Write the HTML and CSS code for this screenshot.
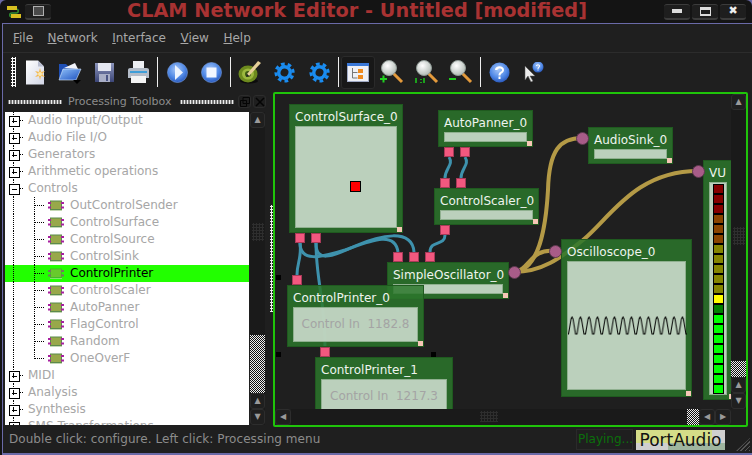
FILE: index.html
```html
<!DOCTYPE html>
<html lang="en">
<head>
  <meta charset="UTF-8">
  <meta name="viewport" content="width=device-width, initial-scale=1.0">
  <title>CLAM Network Editor</title>
  <link rel="stylesheet" href="styles.css">
</head>
<body>

<svg class="defs" width="0" height="0">
  <defs>
    <radialGradient id="blue" cx="45%" cy="35%" r="70%">
      <stop offset="0" stop-color="#a9c8f8"/><stop offset=".6" stop-color="#4f88e6"/><stop offset="1" stop-color="#2350b4"/>
    </radialGradient>
    <radialGradient id="glass" cx="40%" cy="35%" r="70%">
      <stop offset="0" stop-color="#fff"/><stop offset="1" stop-color="#aeb8b2"/>
    </radialGradient>
    <linearGradient id="paper" x1="0" y1="0" x2="1" y2="1">
      <stop offset="0" stop-color="#fff"/><stop offset="1" stop-color="#d2d6e6"/>
    </linearGradient>
    <linearGradient id="floppy" x1="0" y1="0" x2="0" y2="1">
      <stop offset="0" stop-color="#8d96bc"/><stop offset="1" stop-color="#3c4678"/>
    </linearGradient>
    <linearGradient id="folder" x1="0" y1="0" x2="1" y2="1">
      <stop offset="0" stop-color="#8fc0f8"/><stop offset="1" stop-color="#1c50c0"/>
    </linearGradient>
    <pattern id="wavep" width="8.5" height="20" patternUnits="userSpaceOnUse">
      <path d="M0 18h.5L3 3l1-2 1 2 2.500 15h1" fill="none" stroke="#000"/>
    </pattern>
    <g id="mag">
      <line x1="13" y1="13" x2="22" y2="22" stroke="#e39a3c" stroke-width="3"/>
      <circle cx="9" cy="8" r="7.500" fill="url(#glass)" stroke="#8f9a95"/>
    </g>
    <g id="gear" fill="none" stroke="#1a8cf0" transform="rotate(20 12 12)">
      <circle cx="12" cy="12" r="6.500" stroke-width="4"/>
      <circle cx="12" cy="12" r="9.800" stroke-width="3.500" stroke-dasharray="4.200 3.500"/>
    </g>
    <g id="chip">
      <rect x="2" y="2" width="12" height="9" fill="#c4d8b4"/>
      <rect x="2.500" y="1" width="11" height="8.500" fill="#98a84a" stroke="#5c8a4c"/>
      <path d="M0 2h3v2h-3zM0 6.500h3v2h-3zM13 2h3v2h-3zM13 6.500h3v2h-3z" fill="#a820a0"/>
    </g>
  </defs>
</svg>

<div class="window">

  <header class="titlebar">
    <div class="title-left">
      <svg width="14" height="14" viewBox="0 0 14 14"><path d="M3 4h6c3 0 3 4 0 4H5c-3 0-3 4 0 4h6" fill="none" stroke="#2f8f30" stroke-width="1.500"/><path d="M0 1h10v4h-10zM4 9h10v4h-10z" fill="#d8c020"/></svg>
      <span class="wm-btn"><i class="wm-square"></i></span>
    </div>
    <h1 class="title">CLAM Network Editor - Untitled [modified]</h1>
    <div class="title-right">
      <span class="wm-btn"><i class="wm-min"></i></span>
      <span class="wm-btn"><i class="wm-max"></i></span>
      <span class="wm-btn wm-x">✖</span>
    </div>
  </header>

  <div class="frame">
    <nav class="menubar">
      <span><u>F</u>ile</span>
      <span><u>N</u>etwork</span>
      <span><u>I</u>nterface</span>
      <span><u>V</u>iew</span>
      <span><u>H</u>elp</span>
    </nav>

    <div class="toolbar">
      <i class="grip-v"></i>
      <span class="tool"><svg width="21" height="25" viewBox="0 0 21 25"><path d="M1 .5h12l6 6v18h-18z" fill="url(#paper)"/><path d="M13 .5v6h6z" fill="#b9bed0"/><path d="M15 8l1 4 4-1-3 3 3 3-4-1-1 4-1-4-4 1 3-3-3-3 4 1z" fill="#f4b84a"/><circle cx="15" cy="14" r="2" fill="#fbe9b0"/></svg></span>
      <span class="tool"><svg width="24" height="24" viewBox="0 0 24 24"><path d="M1 4h7l2 2h8v12h-17z" fill="#1f4fb4"/><path d="M6 8l11-5 3 6z" fill="#f2f4fa"/><path d="M5 9h18l-5 11h-17z" fill="url(#folder)" stroke="#d5e6fb" stroke-width=".6"/><path d="M15 20h8l-4 4z" fill="#000"/></svg></span>
      <span class="tool"><svg width="19" height="19" viewBox="0 0 19 19"><path d="M0 0h19v19h-19z" fill="url(#floppy)"/><path d="M3 0h13v8h-13z" fill="#e4e6f0"/><path d="M4 11h11v8h-11z" fill="#a8aec6"/><path d="M11 12h2v6h-2z" fill="#4a5484"/></svg></span>
      <span class="tool"><svg width="23" height="22" viewBox="0 0 23 22"><path d="M6 0h11v9h-11z" fill="#eef0f4"/><path d="M1 9c0-2 2-2 4-2h13c2 0 4 0 4 2v8h-21z" fill="#b4bcc8"/><path d="M3 10h17v2h-17z" fill="#3f9ed8"/><path d="M4 15h15v7h-15z" fill="#f4f4f4"/></svg></span>
      <i class="sep"></i>
      <span class="tool"><svg width="21" height="21" viewBox="0 0 21 21"><circle cx="10.500" cy="10.500" r="10" fill="url(#blue)"/><circle cx="10.500" cy="10.500" r="10" fill="none" stroke="#7aa4ea" stroke-width=".6"/><path d="M8 3l8 7.500-8 7.500z" fill="#eef4ff"/></svg></span>
      <span class="tool"><svg width="21" height="21" viewBox="0 0 21 21"><circle cx="10.500" cy="10.500" r="10" fill="url(#blue)"/><circle cx="10.500" cy="10.500" r="10" fill="none" stroke="#7aa4ea" stroke-width=".6"/><rect x="5.500" y="5.500" width="10" height="10" fill="#f2f6ff"/></svg></span>
      <i class="sep"></i>
      <span class="tool"><svg width="24" height="24" viewBox="0 0 24 24"><ellipse cx="11" cy="21" rx="9" ry="2.500" fill="#0c0c0c"/><ellipse cx="10" cy="14" rx="9.500" ry="8.500" fill="#6d8a1e"/><ellipse cx="10" cy="14" rx="6" ry="5.500" fill="#9cb83e"/><circle cx="10" cy="14" r="3" fill="#3e5a14"/><path d="M9 14l11-13 3 2-12 13z" fill="#e6cf98"/><path d="M9 14l2 2-3 1z" fill="#222"/></svg></span>
      <span class="tool"><svg width="21" height="21" viewBox="0 0 24 24"><use href="#gear"/></svg></span>
      <span class="tool"><svg width="21" height="21" viewBox="0 0 24 24"><use href="#gear"/></svg></span>
      <i class="sep"></i>
      <span class="tool toggle">
        <svg width="22" height="19" viewBox="0 0 22 19"><rect x=".5" y=".5" width="21" height="18" fill="#eef0f6" stroke="#a0aac4"/><rect x="0" y="0" width="22" height="3" fill="#3a78d8"/><path d="M5.500 5v10h5M5.500 9.500h5" fill="none" stroke="#777"/><path d="M11 6h5v4h-5zM11 12h5v4h-5z" fill="#ee8a20"/></svg>
      </span>
      <span class="tool"><svg width="24" height="24" viewBox="0 0 24 24"><use href="#mag"/><path d="M0 19h7M3.500 15.500v7" stroke="#20d020" stroke-width="2"/></svg></span>
      <span class="tool"><svg width="24" height="24" viewBox="0 0 24 24"><use href="#mag"/><path d="M0 18h2v5h-2zM5 19h2v1h-2zM5 22h2v1h-2zM8 18h2v5h-2z" fill="#1ca01c"/></svg></span>
      <span class="tool"><svg width="24" height="24" viewBox="0 0 24 24"><use href="#mag"/><path d="M0 19h7" stroke="#20d020" stroke-width="2"/></svg></span>
      <i class="sep"></i>
      <span class="tool"><svg width="21" height="21" viewBox="0 0 21 21"><circle cx="10.500" cy="10.500" r="10" fill="url(#blue)"/><path d="M6 8c0-5 9-5 9 0 0 3-3.500 3-3.500 5.500h-2c0-4 3.500-3.500 3.500-5.500 0-2-4.500-2-4.500 0zM9.500 14.500h2v2.500h-2z" fill="#fff"/></svg></span>
      <span class="tool"><svg width="20" height="20" viewBox="0 0 20 20"><path d="M1 4v14l3-4 3 6 2-1-3-5h5z" fill="#ececec" stroke="#555" stroke-width=".5"/><circle cx="14" cy="5" r="5.500" fill="url(#blue)"/><path d="M12 4c0-2 4-2 4 0 0 1.500-1.500 1.500-1.500 3h-1c0-2 1.500-2 1.500-3 0-1-2-1-2 0zM13.500 7.500h1v1h-1z" fill="#fff"/></svg></span>
    </div>

    <div class="workspace">
      <aside class="dock">
        <div class="dock-title">
          <i class="grip-h"></i>
          <span class="dock-name">Processing Toolbox</span>
          <i class="grip-h"></i>
          <span class="dock-btn">
            <svg width="10" height="10" viewBox="0 0 10 10"><path d="M3 .5h6.500v6h-6.500zM.5 3.500h6v6h-6z" fill="#1f1f1f" stroke="#050505"/></svg>
          </span>
          <span class="dock-btn">
            <svg width="10" height="10" viewBox="0 0 10 10"><path d="M1 1l8 8M9 1l-8 8" stroke="#050505" stroke-width="1.500"/></svg>
          </span>
        </div>
        <div class="toolbox">
          <ul class="tree">
            <li class="cat closed">Audio Input/Output</li>
            <li class="cat closed">Audio File I/O</li>
            <li class="cat closed">Generators</li>
            <li class="cat closed">Arithmetic operations</li>
            <li class="cat open">Controls</li>
            <li class="leaf"><svg width="16" height="12"><use href="#chip"/></svg>OutControlSender</li>
            <li class="leaf"><svg width="16" height="12"><use href="#chip"/></svg>ControlSurface</li>
            <li class="leaf"><svg width="16" height="12"><use href="#chip"/></svg>ControlSource</li>
            <li class="leaf"><svg width="16" height="12"><use href="#chip"/></svg>ControlSink</li>
            <li class="leaf current"><svg width="16" height="12"><use href="#chip"/></svg>ControlPrinter</li>
            <li class="leaf"><svg width="16" height="12"><use href="#chip"/></svg>ControlScaler</li>
            <li class="leaf"><svg width="16" height="12"><use href="#chip"/></svg>AutoPanner</li>
            <li class="leaf"><svg width="16" height="12"><use href="#chip"/></svg>FlagControl</li>
            <li class="leaf"><svg width="16" height="12"><use href="#chip"/></svg>Random</li>
            <li class="leaf last"><svg width="16" height="12"><use href="#chip"/></svg>OneOverF</li>
            <li class="cat closed">MIDI</li>
            <li class="cat closed">Analysis</li>
            <li class="cat closed">Synthesis</li>
            <li class="cat closed">SMS Transformations</li>
          </ul>
          <div class="vscroll tree-vs">
            <span class="sb-btn">▲</span>
            <span class="sb-space"></span>
            <span class="sb-dither"></span>
            <span class="sb-btn">▲</span>
            <span class="sb-btn">▼</span>
            <i class="sb-dots"></i>
          </div>
        </div>
      </aside>

      <i class="splitter"></i>

      <main class="canvas-frame">
        <div class="canvas-row">
          <div class="canvas">
            <svg class="wires" width="456" height="315" viewBox="275 94 456 315">
              <g class="wire-blue">
                <path d="M300 243C300 262 320 258 345 250C370 241 395 230 398 252"/>
                <path d="M316 243C316 262 330 258 355 246C380 235 412 228 414 252"/>
                <path d="M300 243C302 258 297 262 297 275"/>
                <path d="M316 243C316 280 325 300 325 347"/>
                <path d="M449 157C454 165 445 168 445 178"/>
                <path d="M465 157C470 165 461 168 461 178"/>
                <path d="M445 235C445 246 430 240 430 252"/>
              </g>
              <g class="wire-tan">
                <path d="M514 272C530 270 530 248 555 251"/>
                <path d="M514 272C540 270 546 225 548 190C549 150 560 138 582 138"/>
                <path d="M514 272C545 272 565 254 583 240C610 218 635 171 698 171"/>
              </g>
            </svg>

            <div class="node n-surface">
              <div class="node-name">ControlSurface_0</div>
              <div class="node-body"><i class="knob"></i></div>
              <i class="resize"></i>
              <i class="port cp" style="left:5px;top:128px"></i>
              <i class="port cp" style="left:21px;top:128px"></i>
            </div>
            <div class="node n-panner">
              <div class="node-name">AutoPanner_0</div>
              <div class="node-body"></div>
              <i class="resize"></i>
              <i class="port cp" style="left:5px;top:36px"></i>
              <i class="port cp" style="left:21px;top:36px"></i>
            </div>
            <div class="node n-scaler">
              <div class="node-name">ControlScaler_0</div>
              <div class="node-body"></div>
              <i class="resize"></i>
              <i class="port cp" style="left:5px;top:-11px"></i>
              <i class="port cp" style="left:21px;top:-11px"></i>
              <i class="port cp" style="left:5px;top:36px"></i>
            </div>
            <div class="node n-sink">
              <div class="node-name">AudioSink_0</div>
              <div class="node-body"></div>
              <i class="resize"></i>
            </div>
            <div class="node n-scope">
              <div class="node-name">Oscilloscope_0</div>
              <div class="node-body">
                <svg class="wave" width="119" height="20"><rect width="119" height="20" fill="url(#wavep)"/></svg>
              </div>
              <i class="resize"></i>
            </div>
            <div class="node n-vu">
              <div class="node-name">VU</div>
              <div class="node-body">
                <i class="led red"></i><i class="led red"></i><i class="led red"></i>
                <i class="led orange"></i><i class="led orange"></i><i class="led orange"></i>
                <i class="led olive"></i><i class="led olive"></i><i class="led olive"></i><i class="led olive"></i><i class="led olive"></i>
                <i class="led yellow"></i><i class="led dark"></i>
                <i class="led green"></i><i class="led green"></i><i class="led green"></i><i class="led green"></i>
                <i class="led green"></i><i class="led green"></i><i class="led green"></i><i class="led green"></i>
              </div>
              <i class="resize"></i>
            </div>
            <div class="node n-osc">
              <div class="node-name">SimpleOscillator_0</div>
              <div class="node-body"></div>
              <i class="resize"></i>
              <i class="port cp" style="left:5px;top:-11px"></i>
              <i class="port cp" style="left:21px;top:-11px"></i>
              <i class="port cp" style="left:37px;top:-11px"></i>
            </div>
            <div class="node n-print0">
              <div class="node-name">ControlPrinter_0</div>
              <div class="node-body printer">Control In&nbsp; 1182.8</div>
              <i class="resize"></i>
              <i class="port cp" style="left:4px;top:-11px"></i>
            </div>
            <div class="node n-print1">
              <div class="node-name">ControlPrinter_1</div>
              <div class="node-body printer">Control In&nbsp; 1217.3</div>
              <i class="port cp" style="left:4px;top:-11px"></i>
            </div>

            <i class="port ap" style="left:233px;top:172px"></i>
            <i class="port ap" style="left:274px;top:151px"></i>
            <i class="port ap" style="left:301px;top:38px"></i>
            <i class="port ap" style="left:417px;top:71px"></i>
            <i class="handle" style="left:1px;top:181px"></i>
            <i class="handle" style="left:1px;top:258px"></i>
            <i class="handle" style="left:156px;top:258px"></i>
          </div>
          <div class="vscroll canvas-vs">
            <span class="sb-btn">▲</span>
            <span class="sb-space"></span>
            <span class="sb-dither"></span>
            <span class="sb-btn">▲</span>
            <span class="sb-btn">▼</span>
            <i class="sb-dots"></i>
          </div>
        </div>
        <div class="hscroll">
          <span class="sb-btn">◀</span>
          <span class="sb-space"></span>
          <span class="sb-dither"></span>
          <span class="sb-btn">◀</span>
          <span class="sb-btn">▶</span>
          <i class="sb-dots"></i>
        </div>
      </main>
    </div>

    <footer class="statusbar">
      <span class="hint">Double click: configure. Left click: Processing menu</span>
      <span class="playing">Playing...</span>
      <span class="backend">PortAudio</span>
      <i class="sizegrip"></i>
    </footer>
  </div>
</div>

</body>
</html>
```

FILE: styles.css
```css
* {
  box-sizing: border-box;
}

body {
  margin: 0;
  width: 752px;
  height: 455px;
  overflow: hidden;
  background-color: #6a6aa8;
  font-family: "DejaVu Sans", sans-serif;
  font-size: 12px;
}

i {
  display: block;
}

.defs {
  position: absolute;
}

.window {
  width: 752px;
  height: 455px;
  background: #141414;
  border-radius: 6px 6px 0 0;
  display: flex;
  flex-direction: column;
}

/* title bar */
.titlebar {
  height: 23px;
  flex: none;
  display: flex;
  align-items: center;
  justify-content: space-between;
  padding: 0 6px 0 7px;
  position: relative;
}

.title {
  position: absolute;
  left: 127px;
  top: -1px;
  margin: 0;
  font-size: 19.3px;
  line-height: 24px;
  font-weight: bold;
  color: #a83232;
  white-space: nowrap;
}

.title-left,
.title-right {
  display: flex;
  align-items: center;
  gap: 2px;
}

.title-left {
  gap: 4px;
}

.wm-btn {
  width: 26px;
  height: 16px;
  background: #1e1e1e;
  border-top: 1px solid #3c3c3c;
  border-bottom: 2px solid #3c3c3c;
  border-radius: 3px;
  display: flex;
  align-items: center;
  justify-content: center;
}

.wm-square {
  width: 11px;
  height: 10px;
  background: #4a4a4a;
  border: 1px solid #b0b0b0;
}

.wm-min {
  width: 10px;
  height: 4px;
  background: #ddd;
}

.wm-max {
  width: 11px;
  height: 9px;
  border: 1px solid #ddd;
  border-top-width: 3px;
  border-bottom-width: 2px;
}

.wm-x {
  color: #eee;
  font-size: 11px;
  line-height: 14px;
}

/* main frame */
.frame {
  flex: 1;
  min-height: 0;
  margin-left: 2px;
  background: #1f1f1f;
  border: 1px solid #6a6aa8;
  border-bottom-width: 2px;
  border-right: 0;
  display: flex;
  flex-direction: column;
}

.menubar {
  height: 29px;
  flex: none;
  display: flex;
  align-items: center;
  gap: 14.5px;
  padding: 0 0 0 10px;
  color: #a8a8a8;
  border-bottom: 1px solid #2c2c2c;
}

.toolbar {
  height: 38px;
  flex: none;
  display: flex;
  align-items: center;
  padding-left: 8px;
}

.grip-v {
  width: 5px;
  height: 30px;
  background: radial-gradient(circle, #fff 0 1px, transparent 1.2px) 0 0 / 3px 3px;
  margin-right: 2px;
}

.tool {
  width: 34.5px;
  height: 33px;
  flex: none;
  display: flex;
  align-items: center;
  justify-content: center;
}

.sep {
  width: 1px;
  height: 30px;
  margin: 0 2px 0 1px;
  background: #eee;
  flex: none;
}

.toggle {
  background: #181818;
  border: 1px solid #2a2a2a;
  border-radius: 3px;
}

.workspace {
  height: 336px;
  flex: none;
  display: flex;
  align-items: flex-start;
}

/* toolbox */
.dock {
  width: 263px;
  margin-left: 2px;
  flex: none;
}

.dock-title {
  height: 21px;
  display: flex;
  align-items: center;
  padding-left: 3px;
  color: #8c8c8c;
  font-size: 11px;
}

.dock-name {
  width: 104px;
  margin: 0 8px 0 6px;
  white-space: nowrap;
}

.grip-h {
  width: 54px;
  height: 4px;
  background: radial-gradient(circle, #eee 0 1px, transparent 1.2px) 0 0 / 3px 2px;
}

.dock-btn {
  width: 13px;
  height: 13px;
  margin-left: 4px;
  margin-right: -2px;
  border: 1px solid #2c2c2c;
  border-radius: 3px;
  display: flex;
  align-items: center;
  justify-content: center;
}

.toolbox {
  height: 313px;
  display: flex;
  overflow: hidden;
}

.tree {
  width: 244px;
  height: 313px;
  margin: 0 1px 0 0;
  padding: 0;
  list-style: none;
  background: #fff;
  overflow: hidden;
  color: #a6a6a6;
  flex: none;
}

.tree li {
  height: 17px;
  line-height: 17px;
  position: relative;
  white-space: nowrap;
}

.cat {
  padding-left: 23px;
  background:
    repeating-linear-gradient(#000 0 1px, transparent 1px 2px) 8px 0 / 1px 100% no-repeat,
    repeating-linear-gradient(90deg, #000 0 1px, transparent 1px 2px) 13px 8px / 6px 1px no-repeat;
}

.cat::before {
  content: "";
  position: absolute;
  left: 4px;
  top: 4px;
  width: 9px;
  height: 9px;
  background: #fff linear-gradient(#000, #000) center / 5px 1px no-repeat;
  border: 1px solid #000;
  z-index: 1;
}

.closed::after {
  content: "";
  position: absolute;
  left: 8px;
  top: 6px;
  width: 1px;
  height: 5px;
  background: #000;
  z-index: 2;
}

.leaf {
  padding-left: 43px;
  display: flex;
  align-items: center;
  gap: 6px;
  background:
    repeating-linear-gradient(#000 0 1px, transparent 1px 2px) 8px 0 / 1px 100% no-repeat,
    repeating-linear-gradient(#000 0 1px, transparent 1px 2px) 29px 0 / 1px 100% no-repeat,
    repeating-linear-gradient(90deg, #000 0 1px, transparent 1px 2px) 30px 8px / 10px 1px no-repeat;
}

.leaf.last {
  background:
    repeating-linear-gradient(#000 0 1px, transparent 1px 2px) 8px 0 / 1px 100% no-repeat,
    repeating-linear-gradient(#000 0 1px, transparent 1px 2px) 29px 0 / 1px 9px no-repeat,
    repeating-linear-gradient(90deg, #000 0 1px, transparent 1px 2px) 30px 8px / 10px 1px no-repeat;
}

.tree .current {
  background-color: #22ff00;
  color: #000;
}

.current svg {
  opacity: .6;
}

/* scrollbars */
.vscroll {
  width: 15px;
  flex: none;
  display: flex;
  flex-direction: column;
  align-items: center;
  background: #1a1a1a;
  position: relative;
}

.hscroll {
  height: 16px;
  flex: none;
  display: flex;
  padding-right: 15px;
  background: #1f1f1f;
  position: relative;
}

.sb-btn {
  flex: none;
  width: 15px;
  height: 16px;
  color: #9a9a9a;
  font-size: 8px;
  line-height: 14px;
  text-align: center;
  background: #1f1f1f;
  border: 1px solid #2d2d2d;
  border-radius: 3px;
}

.hscroll .sb-btn {
  width: 16px;
}

.sb-space {
  flex: 1;
  min-width: 0;
}

.hscroll .sb-space {
  background: #1a1a1a;
}

.sb-dither {
  flex: none;
  width: 100%;
  height: 58px;
  background: repeating-conic-gradient(#111 0 25%, #eee 0 50%) 0 0 / 2px 2px;
}

.hscroll .sb-dither {
  width: 12px;
  height: 100%;
}

.canvas-vs .sb-dither {
  height: 16px;
}

.sb-dots {
  position: absolute;
  width: 12px;
  height: 18px;
  left: 2px;
  background: radial-gradient(circle, #2e2e2e 0 1px, transparent 1.2px) 0 0 / 3px 3px;
}

.tree-vs .sb-dots {
  top: 111px;
}

.canvas-vs .sb-dots {
  top: 133px;
}

.hscroll .sb-dots {
  left: 205px;
  top: 2px;
  width: 18px;
  height: 11px;
}

/* network canvas */
.splitter {
  width: 3px;
  height: 107px;
  margin: 114px 0 0 2px;
  flex: none;
  background: radial-gradient(circle, #eee 0 1px, transparent 1.2px) 0 0 / 3px 3px;
}

.canvas-frame {
  width: 475px;
  height: 335px;
  margin-top: 1px;
  flex: none;
  border: 2px solid #1fc40a;
  border-radius: 2px;
  display: flex;
  flex-direction: column;
}

.canvas-row {
  flex: 1;
  min-height: 0;
  display: flex;
}

.canvas {
  flex: 1;
  position: relative;
  overflow: hidden;
  background: #1f1f1f;
}

.wires {
  position: absolute;
  left: 0;
  top: 0;
}

.wires path {
  fill: none;
}

.wire-blue path {
  stroke: #3e92ad;
  stroke-width: 3;
}

.wire-tan path {
  stroke: #b49a46;
  stroke-width: 4;
}

.node {
  position: absolute;
  background: rgba(44, 119, 44, .85);
  border: 1px solid #1f5a1f;
  padding: 0 5px;
}

.node-name {
  height: 21px;
  line-height: 25px;
  color: #eef4ee;
  font-size: 12px;
  white-space: nowrap;
}

.node-body {
  background: rgba(203, 219, 204, .9);
  border: 1px solid #8fb08f;
  position: relative;
}

.resize {
  position: absolute;
  right: 0;
  bottom: 0;
  width: 5px;
  height: 5px;
  background: #f6c6b6;
}

.n-surface { left: 14px; top: 10px; width: 114px; height: 129px; }
.n-surface .node-body { height: 102px; }
.n-panner { left: 163px; top: 16px; width: 95px; height: 37px; }
.n-panner .node-body { height: 10px; }
.n-scaler { left: 159px; top: 94px; width: 105px; height: 37px; }
.n-scaler .node-body { height: 10px; }
.n-sink { left: 313px; top: 33px; width: 85px; height: 37px; }
.n-sink .node-body { height: 10px; }
.n-scope { left: 286px; top: 145px; width: 131px; height: 158px; }
.n-scope .node-body { height: 129px; }
.n-vu { left: 428px; top: 66px; width: 32px; height: 240px; }
.n-vu .node-body { height: 213px; width: 18px; padding: 1px 3px; }
.n-osc { left: 112px; top: 168px; width: 122px; height: 37px; }
.n-osc .node-body { height: 10px; }
.n-print0 { left: 12px; top: 191px; width: 137px; height: 62px; }
.n-print1 { left: 40px; top: 263px; width: 138px; height: 70px; }

.printer {
  height: 35px;
  line-height: 32px;
  text-align: center;
  color: #a4a4a4;
  font-size: 12px;
  white-space: nowrap;
}

.knob {
  position: absolute;
  left: 54px;
  top: 54px;
  width: 11px;
  height: 11px;
  background: #f00;
  border: 1px solid #000;
}

.wave {
  position: absolute;
  left: 0;
  top: 54px;
}

.led {
  width: 11px;
  height: 10px;
  border: 1px solid #000;
}

.red { background: #850000; }
.orange { background: #8a4400; }
.olive { background: #858500; }
.yellow { background: #ffff00; }
.dark { background: #008000; }
.green { background: #00ff00; }

.port {
  position: absolute;
  z-index: 3;
}

.cp {
  width: 10px;
  height: 10px;
  background: #f2587f;
  border: 1px solid #a83a58;
}

.ap {
  width: 13px;
  height: 13px;
  border-radius: 50%;
  background: #a85c88;
  border: 1px solid #5e3a50;
}

.handle {
  position: absolute;
  width: 5px;
  height: 5px;
  background: #000;
}

/* status bar */
.statusbar {
  flex: 1;
  display: flex;
  align-items: flex-start;
  color: #8c8c8c;
  padding: 3px 0 0 6px;
  position: relative;
}

.hint {
  width: 567px;
  line-height: 19px;
  letter-spacing: .06px;
  flex: none;
}

.playing {
  width: 57px;
  height: 21px;
  margin-top: -1px;
  line-height: 19px;
  padding-left: 1px;
  border: 1px solid #2a2a2a;
  color: #0b6f0b;
  white-space: nowrap;
  flex: none;
}

.backend {
  width: 89px;
  height: 20px;
  margin-left: 3px;
  line-height: 20px;
  text-align: center;
  color: #111;
  font-size: 17px;
  flex: none;
  background:
    linear-gradient(#d5dd88, #d5dd88) 0 0 / 76px 13px no-repeat,
    linear-gradient(#9fb59f, #9fb59f) 32px 13px / 57px 7px no-repeat,
    #cfcfcf;
}

.sizegrip {
  position: absolute;
  right: 2px;
  bottom: 2px;
  width: 14px;
  height: 13px;
  background: repeating-linear-gradient(135deg, #555 0 1px, transparent 1px 3px);
  clip-path: polygon(100% 0, 100% 100%, 0 100%);
}
```
